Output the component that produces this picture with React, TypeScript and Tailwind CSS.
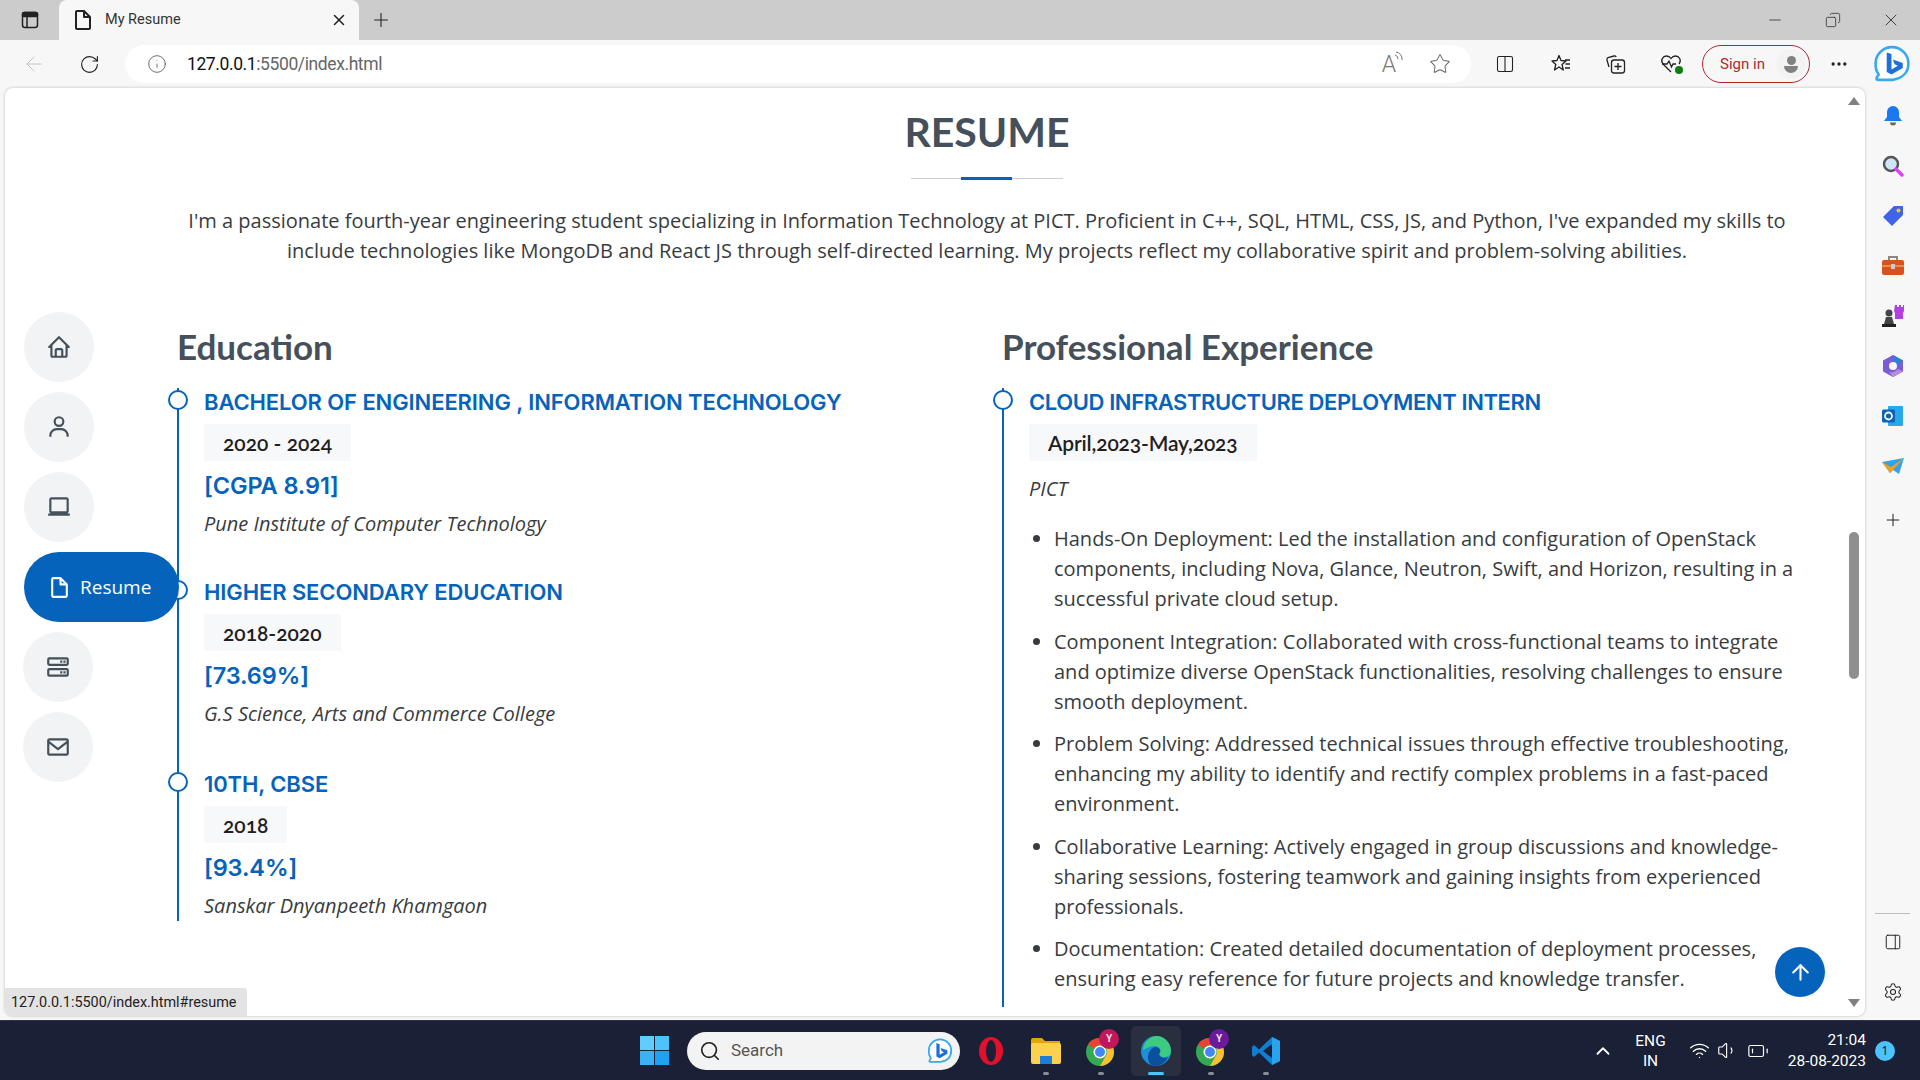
import React from "react";
import { BiHome, BiUser, BiLaptop, BiFileBlank, BiServer, BiEnvelope } from "react-icons/bi";
import { ArrowLeft, RotateCw, Info, Star, X, Plus, Minus, Copy, Search, ChevronUp, Wifi, Settings, MoreHorizontal, ArrowUp, PanelRight, Columns2, Volume1, BatteryLow } from "lucide-react";

const Bing = ({ s = 36 }: { s?: number }) => (
  <svg width={s} height={s} viewBox="0 0 36 36">
    <path d="M18 2a15.5 15.5 0 0 1 15.5 15.5c0 8-5 14-15 15.500H4.500c-1 0-1.500-1-1-2l1.800-3A16 16 0 0 1 2.500 17.500 15.500 15.500 0 0 1 18 2z" fill="#fff" stroke="#39a9ee" strokeWidth="2.500" />
    <path d="M13 7l4.500 1.600v14.500l6-3.400-3-1.400-1.800-4.600 9.500 3.300v4.800L17.500 28 13 25.500z" fill="#1e6fdc" />
  </svg>
);

const Chrome = ({ badge }: { badge: string }) => (
  <div className="relative w-[32px] h-[32px]">
    <svg width="32" height="32" viewBox="0 0 32 32">
      <circle cx="15" cy="17" r="14" fill="#34a853" />
      <path d="M15 3a14 14 0 0 1 12.100 7H15a7 7 0 0 0-6.100 3.500L3 9.500A14 14 0 0 1 15 3z" fill="#ea4335" />
      <path d="M27.100 10A14 14 0 0 1 15 31l6-10.500A7 7 0 0 0 21 13z" fill="#fbc02d" />
      <circle cx="15" cy="17" r="6.500" fill="#fff" />
      <circle cx="15" cy="17" r="5" fill="#4285f4" />
    </svg>
    <div className={`absolute -top-[6px] left-[14px] w-[20px] h-[20px] rounded-full flex items-center justify-center text-[10px] font-bold text-[#f3d7e0] ${badge}`}>Y</div>
  </div>
);

const Dot = ({ w = 6, c = "bg-[#8a8d95]" }: { w?: number; c?: string }) => (
  <div className={`h-[3px] rounded-full ${c} ${w === 6 ? "w-[6px]" : "w-[16px]"}`} />
);

const TaskIcon = ({ children, dot, active }: { children: React.ReactNode; dot?: boolean; active?: boolean }) => (
  <div className={`relative w-[50px] h-[50px] flex items-center justify-center rounded-[5px] ${active ? "bg-[#2a2f40]" : ""}`}>
    {children}
    {dot && <div className="absolute bottom-[1px] left-0 right-0 flex justify-center"><Dot w={active ? 16 : 6} c={active ? "bg-[#4cc2ff]" : "bg-[#8a8d95]"} /></div>}
  </div>
);

const SideIcon = ({ children }: { children: React.ReactNode }) => (
  <div className="h-[50px] flex items-center justify-center">{children}</div>
);

const NavCircle = ({ children, x = 0 }: { children: React.ReactNode; x?: number }) => (
  <div className={`w-[70px] h-[70px] rounded-full bg-[#f2f3f5] flex items-center justify-center text-[#45505b] ${x ? "-ml-[1px]" : ""}`}>{children}</div>
);

const edu = [
  { t: "BACHELOR OF ENGINEERING , INFORMATION TECHNOLOGY", d: "2020 - 2024", s: "[CGPA 8.91]", c: "Pune Institute of Computer Technology", pb: "pb-[39px]" },
  { t: "HIGHER SECONDARY EDUCATION", d: "2018-2020", s: "[73.69%]", c: "G.S Science, Arts and Commerce College", pb: "pb-[41px]" },
  { t: "10TH, CBSE", d: "2018", s: "[93.4%]", c: "Sanskar Dnyanpeeth Khamgaon", pb: "pb-0" },
];

const bullets = [
  "Hands-On Deployment: Led the installation and configuration of OpenStack components, including Nova, Glance, Neutron, Swift, and Horizon, resulting in a successful private cloud setup.",
  "Component Integration: Collaborated with cross-functional teams to integrate and optimize diverse OpenStack functionalities, resolving challenges to ensure smooth deployment.",
  "Problem Solving: Addressed technical issues through effective troubleshooting, enhancing my ability to identify and rectify complex problems in a fast-paced environment.",
  "Collaborative Learning: Actively engaged in group discussions and knowledge-sharing sessions, fostering teamwork and gaining insights from experienced professionals.",
  "Documentation: Created detailed documentation of deployment processes, ensuring easy reference for future projects and knowledge transfer.",
];

const Circle = () => (
  <div className="absolute -left-[11px] top-[2px] w-[20px] h-[20px] rounded-full bg-white border-2 border-[#0563bb]" />
);

const head = "font-['Lato'] font-bold text-[#45505b]";
const h4 = "font-['Inter'] font-semibold text-[22px] leading-[24px] text-[#0563bb] pt-[2px] mb-[10px]";
const dateBox = "inline-block h-[37px] leading-[37px] px-[19px] bg-[#f7f8f9] text-[#1f2021] font-['Lato'] font-semibold text-[21px] oldstyle-nums align-top";

export default function App() {
  return (
    <div className="w-[1920px] h-[1080px] overflow-hidden flex flex-col bg-[#f7f7f7] font-['Open_Sans'] text-[#383c40]">
      {/* tab strip */}
      <div className="h-[40px] bg-[#cccccc] flex items-end shrink-0">
        <div className="w-[59px] h-[40px] flex items-center justify-center">
          <svg width="20" height="20" viewBox="0 0 20 20" fill="none" stroke="#222" strokeWidth="1.500"><rect x="2.500" y="2.500" width="15" height="15" rx="2.500" /><rect x="2.500" y="2.500" width="15" height="4" rx="1.500" fill="#222" /><path d="M7 6v11" /></svg>
        </div>
        <div className="w-[300px] h-[40px] bg-[#f7f7f7] rounded-t-[8px] flex items-center pl-[12px] pr-[11px]">
          <BiFileBlank size={24} className="text-[#222] shrink-0" />
          <span className="ml-[10px] text-[14.500px] text-[#333] font-['Roboto'] flex-1">My Resume</span>
          <X size={18} className="text-[#222]" />
        </div>
        <div className="w-[44px] h-[40px] flex items-center justify-center">
          <Plus size={22} strokeWidth={1.200} className="text-[#222]" />
        </div>
        <div className="flex-1" />
        <div className="flex h-[40px] items-center text-[#222]">
          <div className="w-[58px] flex justify-center"><Minus size={18} strokeWidth={1} /></div>
          <div className="w-[58px] flex justify-center"><Copy size={16} strokeWidth={1.100} className="scale-x-[-1]" /></div>
          <div className="w-[58px] flex justify-center"><X size={20} strokeWidth={1} /></div>
        </div>
      </div>

      {/* toolbar */}
      <div className="h-[48px] shrink-0 flex items-center bg-[#f7f7f7]">
        <div className="w-[68px] flex justify-center"><ArrowLeft size={24} strokeWidth={1} className="text-[#c4c4c4]" /></div>
        <div className="w-[42px] flex justify-center"><RotateCw size={21} strokeWidth={1.300} className="text-[#222]" /></div>
        <div className="w-[1346px] h-[38px] ml-[15px] bg-white rounded-full flex items-center pl-[22px] pr-[20px]">
          <Info size={20} strokeWidth={1} className="text-[#555]" />
          <span className="ml-[20px] text-[17.500px] font-['Roboto'] tracking-[-0.4px] text-[#111]">127.0.0.1<span className="text-[#666]">:5500/index.html</span></span>
          <div className="flex-1" />
          <span className="relative text-[23px] font-['Roboto'] font-light text-[#777] leading-none mr-[33px]">A<svg className="absolute -top-[2px] -right-[8px]" width="10" height="13" viewBox="0 0 10 13" fill="none" stroke="#777"><path d="M1 4a4 4 0 0 1 3 4M2 1a7 7 0 0 1 6 8" /></svg></span>
          <Star size={22} strokeWidth={1.100} className="text-[#666]" />
        </div>
        <div className="w-[56px] ml-[6px] flex justify-center"><Columns2 size={20} strokeWidth={1.300} className="text-[#222]" /></div>
        <div className="w-[55px] flex justify-center">
          <svg width="22" height="22" viewBox="0 0 22 22" fill="none" stroke="#222" strokeWidth="1.300" strokeLinejoin="round"><path d="M9 2.500l2 5 5 .500-4 3.500 1.300 5.500L9 14l-4.500 3 1.300-5.500L2 8l5-.500z" /><path d="M15 7h5M15.500 11H20M15 15h5" /></svg>
        </div>
        <div className="w-[56px] flex justify-center">
          <svg width="22" height="22" viewBox="0 0 22 22" fill="none" stroke="#222" strokeWidth="1.300"><path d="M4 14L2 7c-.300-1 .200-2 1-2.300l6-1.700c1-.200 1.800.200 2.200 1" /><rect x="6.500" y="7" width="13" height="13" rx="2.500" /><path d="M13 10v7M9.500 13.500h7" /></svg>
        </div>
        <div className="w-[54px] flex justify-center relative">
          <svg width="22" height="22" viewBox="0 0 22 22" fill="none" stroke="#222" strokeWidth="1.300"><path d="M11 19L3 11C0 7 3 3 6.500 3c2 0 3.500 1 4.500 2.500C12 4 13.500 3 15.500 3 19 3 22 7 19 11" /><path d="M2 11h5l2-3 2.500 6 1.500-3h3" /></svg>
          <div className="absolute left-[31px] top-[13px] w-[8px] h-[8px] rounded-full bg-[#107c10]" />
        </div>
        <div className="w-[108px] h-[38px] ml-[4px] rounded-full border border-[#b02a2a] flex items-center pl-[17px] pr-[3px]">
          <span className="text-[15px] text-[#b02a2a] font-['Roboto']">Sign in</span>
          <div className="flex-1" />
          <div className="w-[30px] h-[30px] rounded-full bg-[#f3f3f3] flex flex-col items-center justify-center">
            <div className="w-[9px] h-[9px] rounded-full bg-[#808080]" />
            <div className="w-[14px] h-[7px] rounded-b-full rounded-t-[3px] bg-[#808080] mt-[1px]" />
          </div>
        </div>
        <div className="w-[58px] flex justify-center"><MoreHorizontal size={20} className="text-[#222]" /></div>
        <div className="flex-1 flex justify-center pr-[4px]"><Bing s={38} /></div>
      </div>

      {/* middle */}
      <div className="flex-1 flex min-h-0">
        <div className="w-[1865px] pl-[5px] pb-[4px] shrink-0">
          <div className="relative h-full bg-white rounded-[8px] shadow-[0_0_3px_rgba(0,0,0,0.25)] overflow-hidden">
            <div className="flex flex-col items-center pt-[21px] pl-[104px]">
              <h2 className={`${head} text-[41px] leading-[46px]`}>RESUME</h2>
              <div className="relative mt-[23px] w-[152px] h-[1px] bg-[#ccd0d4]">
                <div className="absolute left-[50px] -top-[1.500px] w-[51px] h-[3px] bg-[#0563bb]" />
              </div>
              <p className="w-[1640px] text-center text-[20px] leading-[30px] mt-[27px]">
                I'm a passionate fourth-year engineering student specializing in Information Technology at PICT. Proficient in C++, SQL, HTML, CSS, JS, and Python, I've expanded my skills to include technologies like MongoDB and React JS through self-directed learning. My projects reflect my collaborative spirit and problem-solving abilities.
              </p>
            </div>

            <div className="grid grid-cols-[825px_808px] pl-[172px] mt-[61px]">
              <div>
                <h3 className={`${head} text-[35px] leading-[38px] mb-[23px]`}>Education</h3>
                {edu.map((e) => (
                  <div key={e.t} className={`relative border-l-2 border-[#0563bb] pl-[25px] ${e.pb}`}>
                    <Circle />
                    <h4 className={`${h4} tracking-[-0.1px]`}>{e.t}</h4>
                    <div className={dateBox}>{e.d}</div>
                    <h5 className="font-['Inter'] font-semibold text-[23.500px] tracking-[-0.1px] leading-[30px] text-[#0563bb] mt-[10px] mb-[8px]">{e.s}</h5>
                    <p className="italic text-[20px] leading-[30px]">{e.c}</p>
                  </div>
                ))}
              </div>
              <div>
                <h3 className={`${head} text-[35px] leading-[38px] mb-[23px]`}>Professional Experience</h3>
                <div className="relative border-l-2 border-[#0563bb] pl-[25px]">
                  <Circle />
                  <h4 className={`${h4} tracking-[-0.4px]`}>CLOUD INFRASTRUCTURE DEPLOYMENT INTERN</h4>
                  <div className={`${dateBox} tracking-[-0.15px]`}>April,2023-May,2023</div>
                  <p className="italic text-[20px] leading-[30px] mt-[13px] mb-[20px]">PICT</p>
                  <ul className="flow-root list-disc pl-[25px] text-[20px] leading-[30px]">
                    {bullets.map((b) => (
                      <li key={b} className="mb-[12.500px]">{b}</li>
                    ))}
                  </ul>
                </div>
              </div>
            </div>

            {/* floating side nav */}
            <nav className="absolute left-[19px] top-[224px] flex flex-col gap-[10px]">
              <NavCircle><BiHome size={26} /></NavCircle>
              <NavCircle><BiUser size={26} /></NavCircle>
              <NavCircle><BiLaptop size={26} /></NavCircle>
              <div className="w-[155px] h-[70px] rounded-full bg-[#0563bb] flex items-center pl-[23px] text-white">
                <BiFileBlank size={25} />
                <span className="ml-[8px] text-[19px]">Resume</span>
              </div>
              <NavCircle x={1}><BiServer size={26} /></NavCircle>
              <NavCircle x={1}><BiEnvelope size={26} /></NavCircle>
            </nav>

            {/* scrollbar */}
            <div className="absolute right-[5px] top-[9px] bottom-[9px] w-[12px] flex flex-col items-center justify-between">
              <div className="w-0 h-0 border-l-[6px] border-r-[6px] border-b-[8px] border-l-transparent border-r-transparent border-b-[#808080]" />
              <div className="w-0 h-0 border-l-[6px] border-r-[6px] border-t-[8px] border-l-transparent border-r-transparent border-t-[#808080]" />
            </div>
            <div className="absolute right-[6px] top-[444px] w-[10px] h-[147px] rounded-full bg-[#8f8f8f]" />

            {/* back to top */}
            <div className="absolute left-[1770px] top-[859px] w-[50px] h-[50px] rounded-full bg-[#0563bb] flex items-center justify-center">
              <ArrowUp size={25} strokeWidth={2} className="text-white" />
            </div>

            {/* status bubble */}
            <div className="absolute left-0 bottom-0 w-[242px] h-[28px] bg-[#e3e3e3] rounded-tr-[3px] flex items-center pl-[6px] pt-[1px] text-[14.400px] font-['Roboto'] text-[#222]">127.0.0.1:5500/index.html#resume</div>
          </div>
        </div>

        {/* edge sidebar */}
        <div className="flex-1 flex flex-col pt-[3px] pb-[3px] items-center">
          <SideIcon>
            <svg width="22" height="22" viewBox="0 0 22 22"><path d="M11 1a6 6 0 0 1 6 6v5l3 4H2l3-4V7a6 6 0 0 1 6-6z" fill="#1a78f0" /><path d="M8 17.500h6a3 3 0 0 1-6 0z" fill="#666" /></svg>
          </SideIcon>
          <SideIcon>
            <svg width="22" height="22" viewBox="0 0 22 22"><circle cx="9" cy="9" r="7" fill="#cfe4f5" stroke="#555" strokeWidth="2.500" /><path d="M14 14l6 6" stroke="#d946ef" strokeWidth="3.500" strokeLinecap="round" /></svg>
          </SideIcon>
          <SideIcon>
            <svg width="22" height="22" viewBox="0 0 22 22"><path d="M12 1h9v9L10 21 1 12z" fill="#3f64e8" /><circle cx="16.500" cy="5.500" r="2" fill="#f5c33b" /></svg>
          </SideIcon>
          <SideIcon>
            <svg width="24" height="22" viewBox="0 0 24 22"><path d="M8 5V2h8v3" fill="none" stroke="#888" strokeWidth="2" /><rect x="1" y="5" width="22" height="15" rx="2" fill="#d4531f" /><path d="M1 10h22v2H1z" fill="#f08a4b" /><rect x="10" y="9" width="4" height="5" fill="#ccc" /></svg>
          </SideIcon>
          <SideIcon>
            <svg width="24" height="24" viewBox="0 0 24 24"><circle cx="8" cy="9" r="3.500" fill="#444" /><path d="M5 13h6l2 7H3z" fill="#444" /><path d="M1 20h14v3H1z" fill="#222" /><path d="M14 1h2v2h2V1h2v2h2V1h1v6l-1 2v6h-8V9l-1-2z" fill="#b43fe0" /></svg>
          </SideIcon>
          <SideIcon>
            <svg width="22" height="24" viewBox="0 0 22 24"><path d="M11 1l10 5.500v11L11 23 1 17.500v-11z" fill="#7a5cd6" /><path d="M11 1l10 5.500-5 5a5 5 0 0 0-5-3z" fill="#2f7fd6" /><path d="M21 17.500L11 23l-4-5c3 1 6 0 9-3z" fill="#b98ae0" /><circle cx="11" cy="12" r="4" fill="#f7f7f7" /></svg>
          </SideIcon>
          <SideIcon>
            <svg width="22" height="22" viewBox="0 0 22 22"><rect x="6" y="1" width="15" height="20" rx="1" fill="#28a8ea" /><rect x="0" y="4.500" width="13" height="13" rx="1.500" fill="#0a64b8" /><circle cx="6.500" cy="11" r="3.500" fill="none" stroke="#fff" strokeWidth="1.800" /></svg>
          </SideIcon>
          <SideIcon>
            <svg width="24" height="18" viewBox="0 0 24 18"><path d="M1 5l22-4-5 16-6-4-3 3z" fill="#2ea4ec" /><path d="M1 5l9 5 13-9-11 12-3 3z" fill="#f0a020" /></svg>
          </SideIcon>
          <div className="h-[58px] flex items-center justify-center"><Plus size={20} strokeWidth={1.200} className="text-[#222]" /></div>
          <div className="flex-1" />
          <div className="w-[35px] h-px bg-[#bdbdbd] mb-[3px]" />
          <SideIcon><PanelRight size={18} strokeWidth={1.300} className="text-[#222]" /></SideIcon>
          <SideIcon><Settings size={20} strokeWidth={1.300} className="text-[#222]" /></SideIcon>
        </div>
      </div>

      {/* taskbar */}
      <div className="h-[60px] shrink-0 bg-[#1a2035] flex items-center border-t border-[#2f3446] relative text-white">
        <div className="ml-[640px] grid grid-cols-2 gap-[1px] w-[29px] h-[29px]">
          <div className="bg-[#60cdff]" /><div className="bg-[#4cc2ff]" /><div className="bg-[#3bb2f6]" /><div className="bg-[#1ea3f2]" />
        </div>
        <div className="ml-[18px] w-[273px] h-[38px] bg-[#f3f3f3] rounded-full flex items-center pl-[12px] pr-[7px]">
          <Search size={22} strokeWidth={1.800} className="text-[#222]" />
          <span className="ml-[10px] text-[17px] text-[#555] font-['Roboto'] flex-1">Search</span>
          <Bing s={26} />
        </div>
        <div className="ml-[6px] flex gap-[5px] items-center">
          <TaskIcon>
            <svg width="26" height="30" viewBox="0 0 26 30"><ellipse cx="13" cy="15" rx="12" ry="14" fill="#e2102a" /><ellipse cx="13" cy="15" rx="5" ry="11" fill="#1a2035" /></svg>
          </TaskIcon>
          <TaskIcon dot>
            <svg width="32" height="28" viewBox="0 0 32 28"><path d="M1 3a2 2 0 0 1 2-2h9l3 3h15v4H1z" fill="#e5a50a" /><rect x="1" y="6" width="30" height="21" rx="2" fill="#fdd14d" /><rect x="10" y="19" width="12" height="8" fill="#1c7ed6" /></svg>
          </TaskIcon>
          <TaskIcon dot><Chrome badge="bg-[#c2185b]" /></TaskIcon>
          <TaskIcon dot active>
            <svg width="32" height="32" viewBox="0 0 32 32"><circle cx="16" cy="16" r="15" fill="#1b8fd8" /><path d="M16 1a15 15 0 0 1 15 15c0 4-3 6-7 6-3 0-5-2-5-4 2-3 0-7-4-7-6 0-9 3-12 4A15 15 0 0 1 16 1z" fill="#3ccb7f" /><path d="M16 12c4 0 6 4 3 7 1 4 5 5 9 3a15 15 0 0 1-12 9c-7 0-8-6-8-9 0-5 4-10 8-10z" fill="#0c4f9c" /></svg>
          </TaskIcon>
          <TaskIcon dot><Chrome badge="bg-[#6a1b9a]" /></TaskIcon>
          <TaskIcon dot>
            <svg width="30" height="30" viewBox="0 0 30 30"><path d="M21 1l8 4v20l-8 4-13-12.500L3 21l-2-2v-8l2-2 5 4.500z" fill="#0f7fd0" /><path d="M21 8v14l-9-7z" fill="#1a2035" /><path d="M21 1l8 4v20l-8 4z" fill="#2aa3ef" /></svg>
          </TaskIcon>
        </div>
        <div className="flex-1" />
        <ChevronUp size={22} strokeWidth={2} className="mr-[21px]" />
        <div className="text-[15.500px] leading-[20px] text-center font-['Roboto'] mr-[23px]">ENG<br />IN</div>
        <Wifi size={21} strokeWidth={1.600} className="mr-[7px]" />
        <Volume1 size={21} strokeWidth={1.300} className="mr-[9px]" />
        <BatteryLow size={22} strokeWidth={1.300} className="mr-[19px]" />
        <div className="text-[15.500px] leading-[21px] text-right font-['Roboto'] mr-[9px]">21:04<br />28-08-2023</div>
        <div className="w-[20px] h-[20px] rounded-full bg-[#4cc2ff] text-[#111] text-[12px] flex items-center justify-center mr-[25px]">1</div>
      </div>
    </div>
  );
}
